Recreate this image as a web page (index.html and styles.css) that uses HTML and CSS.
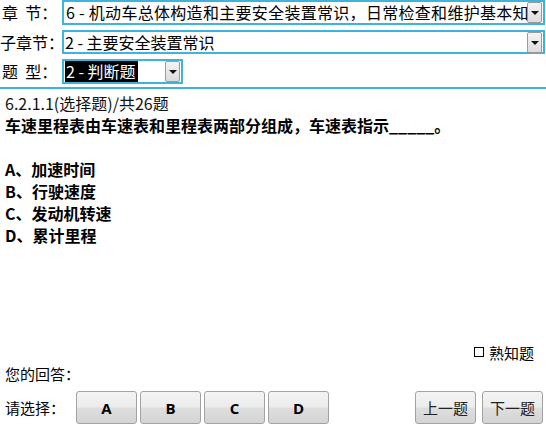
FILE: index.html
```html
<!DOCTYPE html>
<html lang="zh-CN">
<head>
  <meta charset="UTF-8">
  <title>练习</title>
  <link rel="stylesheet" href="styles.css">
</head>
<body>

<div class="page">
  <div class="filters">
    <div class="filter-row">
      <span class="label">章&nbsp;&nbsp;节：</span>
      <div class="combo combo-wide">
        <span class="combo-value clip">6 - 机动车总体构造和主要安全装置常识，日常检查和维护基本知识</span>
        <span class="combo-arrow"></span>
      </div>
    </div>
    <div class="filter-row row-sub">
      <span class="label">子章节：</span>
      <div class="combo combo-wide">
        <span class="combo-value">2 - 主要安全装置常识</span>
        <span class="combo-arrow"></span>
      </div>
    </div>
    <div class="filter-row row-type">
      <span class="label">题&nbsp;&nbsp;型：</span>
      <div class="combo combo-small">
        <span class="combo-value"><span class="selected">2 - 判断题</span></span>
        <span class="combo-arrow"></span>
      </div>
    </div>
  </div>

  <div class="question">
    <div class="q-head">6.2.1.1(选择题)/共26题</div>
    <div class="q-text">车速里程表由车速表和里程表两部分组成，车速表指示_____。</div>
    <div class="q-blank"></div>
    <div class="q-option">A、加速时间</div>
    <div class="q-option">B、行驶速度</div>
    <div class="q-option">C、发动机转速</div>
    <div class="q-option">D、累计里程</div>
  </div>

  <div class="footer">
    <div class="known">
      <span class="check"></span>熟知题
    </div>
    <div class="answer">您的回答：</div>
    <div class="choose">
      <span class="choose-label">请选择：</span>
      <div class="choices">
        <button class="btn btn-choice">A</button>
        <button class="btn btn-choice">B</button>
        <button class="btn btn-choice">C</button>
        <button class="btn btn-choice">D</button>
      </div>
      <div class="nav">
        <button class="btn btn-nav">上一题</button>
        <button class="btn btn-nav">下一题</button>
      </div>
    </div>
  </div>
</div>

</body>
</html>
```

FILE: styles.css
```css
body {
  margin: 0;
  font-family: "Noto Sans CJK SC", "Noto Sans", sans-serif;
  color: #000;
  background: #fff;
}

.page {
  width: 546px;
  height: 429px;
  display: flex;
  flex-direction: column;
  overflow: hidden;
}

/* top selectors */
.filters {
  border-bottom: 2px solid #3cb4dc;
  padding-bottom: 3px;
}

.filter-row {
  display: flex;
  align-items: center;
  height: 25px;
}

.row-sub {
  margin-top: 5px;
  height: 24px;
}

.row-type {
  margin-top: 5px;
}

.label {
  width: 62px;
  flex: none;
  padding-left: 2px;
  font-size: 16px;
  line-height: 21px;
  white-space: nowrap;
  box-sizing: border-box;
}

.row-sub .label {
  padding-left: 0;
}

.combo {
  height: 100%;
  box-sizing: border-box;
  border: 2px solid #3cb4dc;
  display: flex;
  align-items: center;
  background: #fff;
}

.combo-wide {
  flex: 1;
  min-width: 0;
  margin-right: 1px;
}

.combo-small {
  width: 121px;
}

.combo-value {
  flex: 1;
  min-width: 0;
  white-space: nowrap;
  font-size: 16px;
  line-height: 21px;
  padding-left: 1px;
}

/* long chapter name is cut by the box, like the native control */
.clip {
  overflow: hidden;
  padding-left: 2px;
  letter-spacing: 0.3px;
}

.selected {
  background: #000;
  color: #fff;
  padding: 0 2px 0 1px;
  display: inline-block;
  width: 70px;
}

.combo-arrow {
  flex: none;
  width: 15px;
  height: 21px;
  margin-right: 1px;
  box-sizing: border-box;
  border: 1px solid #9a9a9a;
  border-radius: 2px;
  background: linear-gradient(#f4f4f4, #dcdcdc);
  position: relative;
}

.combo-arrow::after {
  content: "";
  position: absolute;
  left: 3px;
  top: 8px;
  border-left: 4px solid transparent;
  border-right: 4px solid transparent;
  border-top: 4px solid #111;
}

/* question body */
.question {
  flex: 1;
  padding: 3px 0 0 5px;
  line-height: 22px;
}

.q-head {
  font-size: 16px;
  color: #111;
}

.q-text,
.q-option {
  font-size: 16px;
  font-weight: bold;
}

.q-blank {
  height: 22px;
}

/* footer */
.footer {
  padding: 0 3px 5px 5px;
}

.known {
  display: flex;
  justify-content: flex-end;
  align-items: center;
  height: 22px;
  font-size: 15px;
  padding-right: 9px;
}

.check {
  width: 10px;
  height: 10px;
  border: 1px solid #000;
  box-sizing: border-box;
  margin-right: 5px;
}

.answer {
  height: 22px;
  line-height: 22px;
  font-size: 15px;
}

.choose {
  display: flex;
  align-items: center;
  margin-top: 6px;
  height: 33px;
}

.choose-label {
  width: 71px;
  font-size: 15px;
}

.choices {
  display: flex;
  gap: 3px;
}

.nav {
  margin-left: auto;
  display: flex;
  gap: 6px;
}

.btn {
  height: 33px;
  border: 1px solid #a3a3a3;
  border-radius: 3px;
  background: linear-gradient(#f4f4f4 0%, #ececec 48%, #dedede 52%, #d4d4d4 100%);
  font-family: inherit;
  color: #000;
  padding: 0;
  cursor: pointer;
}

.btn-choice {
  width: 61px;
  font-size: 15px;
  font-weight: bold;
  font-family: "Open Sans", "Noto Sans", sans-serif;
}

.btn-nav {
  width: 61px;
  font-size: 15px;
  color: #222;
}
```
